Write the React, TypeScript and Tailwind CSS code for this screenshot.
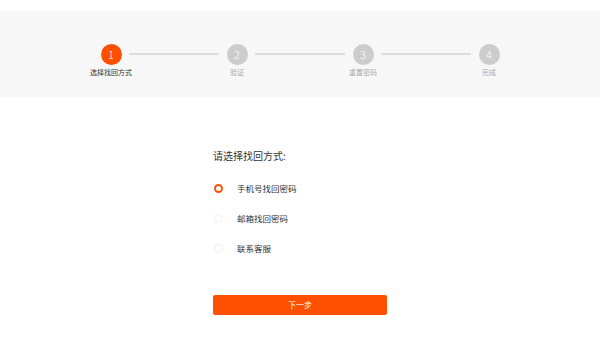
import { useState } from "react"

const steps = ["选择找回方式", "验证", "重置密码", "完成"]
const options = ["手机号找回密码", "邮箱找回密码", "联系客服"]

export default function App() {
  const [current] = useState(0)
  const [picked, setPicked] = useState(0)

  return (
    <div className="w-[600px] h-[339px] bg-white pt-[11px] font-['Noto_Sans_CJK_SC','Noto_Sans',sans-serif]">
      {/* Steps */}
      <div className="bg-[#f7f7f7] h-[86px] pt-[33px] flex justify-center items-start">
        {steps.map((label, i) => (
          <div key={label} className="flex items-start">
            <div className="w-[20px] flex flex-col items-center">
              <div
                className={
                  i === current
                    ? "w-[21px] h-[21px] rounded-full bg-[#ff5000] text-white text-[11px] leading-[21px] text-center font-light"
                    : "w-[21px] h-[21px] rounded-full bg-[#cccccc] text-white text-[11px] leading-[21px] text-center font-light"
                }
              >
                {i + 1}
              </div>
              <div
                className={
                  i === current
                    ? "mt-[3px] whitespace-nowrap text-[7px] leading-[9px] text-[#333]"
                    : "mt-[3px] whitespace-nowrap text-[7px] leading-[9px] text-[#aaa]"
                }
              >
                {label}
              </div>
            </div>
            {i < steps.length - 1 && <div className="w-[90px] h-[2px] mx-[8px] mt-[9px] bg-[#dddddd]" />}
          </div>
        ))}
      </div>

      {/* Form */}
      <div className="w-[174px] mx-auto mt-[53px]">
        <div className="text-[10px] leading-[12px] text-[#333]">请选择找回方式:</div>
        <div className="mt-[11px]">
          {options.map((opt, i) => (
            <div key={opt} className="h-[30px] flex items-center cursor-pointer" onClick={() => setPicked(i)}>
              <span
                className={
                  picked === i
                    ? "ml-[1px] w-[9px] h-[9px] rounded-full border-[2.5px] border-[#ff5000] bg-white"
                    : "ml-[1px] w-[9px] h-[9px] rounded-full border border-[#f0f0f0] bg-white"
                }
              />
              <span className="ml-[14px] text-[8.5px] leading-[10px] text-[#333]">{opt}</span>
            </div>
          ))}
        </div>
        <button className="mt-[32px] w-full h-[20px] rounded-[2px] bg-[#ff5000] text-white text-[8px] leading-[20px]">
          下一步
        </button>
      </div>
    </div>
  )
}
